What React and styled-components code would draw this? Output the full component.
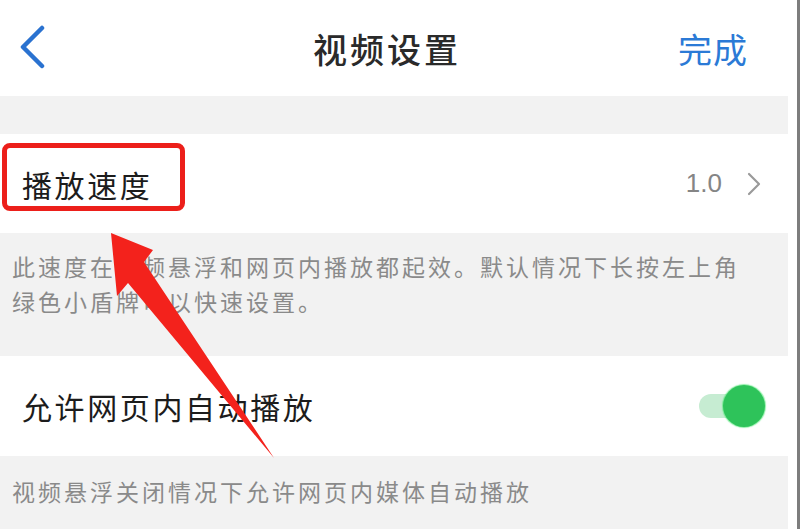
import styled, { createGlobalStyle } from "styled-components";

const Global = createGlobalStyle`
  html, body { margin: 0; padding: 0; background: #fff; }
  body { font-family: "Noto Sans CJK SC", "Noto Sans", sans-serif; }
`;

const Page = styled.div`
  position: relative;
  width: 800px;
  height: 529px;
  overflow: hidden;
  display: flex;
  background: #fff;
`;

const Screen = styled.div`
  flex: 0 0 788px;
  display: flex;
  flex-direction: column;
`;

const Edge = styled.div`
  flex: 0 0 3px;
  margin-left: 9px;
  background: #7d7d7d;
`;

const Header = styled.div`
  height: 96px;
  display: grid;
  grid-template-columns: 120px 1fr 120px;
  align-items: center;
`;

const Back = styled.div`
  padding-left: 18px;
  margin-top: -3px;
  display: flex;
  align-items: center;
  svg { display: block; }
`;

const Title = styled.div`
  text-align: center;
  font-size: 34px;
  font-weight: 500;
  letter-spacing: 3px;
  color: #2a2a2a;
  margin-left: -14px;
`;

const Done = styled.div`
  text-align: right;
  padding-right: 40px;
  font-size: 34px;
  letter-spacing: 1px;
  color: #2b7ad6;
`;

const Band = styled.div`
  height: ${(p) => p.h}px;
  background: #f2f2f2;
  flex-shrink: 0;
`;

const Row = styled.div`
  height: ${(p) => p.h}px;
  flex-shrink: 0;
  display: flex;
  align-items: center;
  justify-content: space-between;
  padding: 0 24px 0 22px;
  background: #fff;
`;

const Label = styled.div`
  font-size: 30px;
  letter-spacing: 2.6px;
  color: #1c1c1c;
`;

const Value = styled.div`
  display: flex;
  align-items: center;
  gap: 24px;
  margin-right: 2px;
  font-family: "Liberation Sans", Arial, sans-serif;
  font-size: 26px;
  color: #858585;
  svg { display: block; }
`;

const Note = styled.div`
  flex-shrink: 0;
  background: #f2f2f2;
  padding: ${(p) => p.pad};
  font-size: 23px;
  line-height: 35px;
  letter-spacing: 3px;
  color: #8a8a8a;
  height: ${(p) => p.h}px;
  box-sizing: border-box;
`;

const Switch = styled.div`
  position: relative;
  width: 66px;
  height: 42px;
  margin-right: -1px;
`;

const Track = styled.div`
  position: absolute;
  left: 0;
  top: 9px;
  width: 52px;
  height: 24px;
  border-radius: 12px;
  background: #c6ecd2;
`;

const Knob = styled.div`
  position: absolute;
  right: 0;
  top: 0;
  width: 42px;
  height: 42px;
  border-radius: 50%;
  background: #2ec35a;
  box-shadow: 0 0 1px 1px rgba(70, 230, 110, 0.6);
`;

const Highlight = styled.div`
  position: absolute;
  left: 2px;
  top: 143px;
  width: 183px;
  height: 68px;
  box-sizing: border-box;
  border: 5px solid #ec1f1a;
  border-radius: 8px;
`;

const Overlay = styled.svg`
  position: absolute;
  left: 0;
  top: 0;
  pointer-events: none;
`;

export default function App() {
  return (
    <>
      <Global />
      <Page>
        <Screen>
          <Header>
            <Back>
              <svg width="28" height="44" viewBox="0 0 28 44">
                <polyline
                  points="24,3 5,22 24,41"
                  fill="none"
                  stroke="#2a72d0"
                  strokeWidth="4.5"
                  strokeLinecap="round"
                  strokeLinejoin="round"
                />
              </svg>
            </Back>
            <Title>视频设置</Title>
            <Done>完成</Done>
          </Header>
          <Band h={38} />
          <Row h={99}>
            <Label>播放速度</Label>
            <Value>
              <span>1.0</span>
              <svg width="16" height="24" viewBox="0 0 16 24">
                <polyline
                  points="3,2 13,12 3,22"
                  fill="none"
                  stroke="#9a9a9a"
                  strokeWidth="2.2"
                  strokeLinecap="round"
                  strokeLinejoin="round"
                />
              </svg>
            </Value>
          </Row>
          <Note h={123} pad="16px 12px 0">
            此速度在视频悬浮和网页内播放都起效。默认情况下长按左上角
            <br />
            绿色小盾牌可以快速设置。
          </Note>
          <Row h={100}>
            <Label>允许网页内自动播放</Label>
            <Switch>
              <Track />
              <Knob />
            </Switch>
          </Row>
          <Note h={73} pad="18px 12px 0">
            视频悬浮关闭情况下允许网页内媒体自动播放
          </Note>
        </Screen>
        <Edge />
        <Highlight />
        <Overlay width="800" height="529" viewBox="0 0 800 529">
          <polygon
            points="111,233 153,250 144,262 274,458 128,283 117,296"
            fill="#f3221c"
          />
        </Overlay>
      </Page>
    </>
  );
}
